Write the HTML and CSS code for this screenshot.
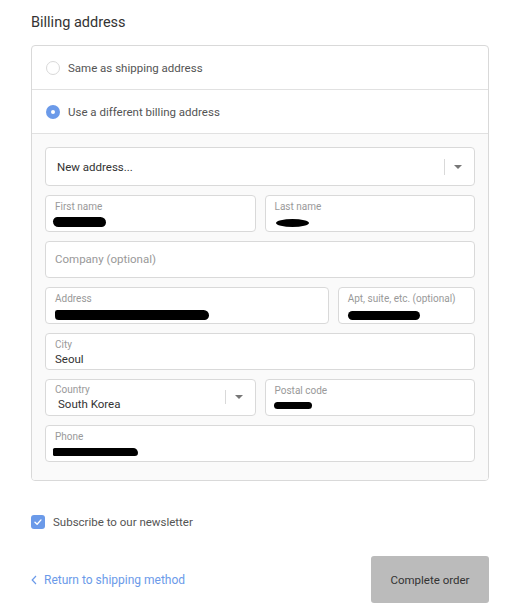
FILE: index.html
```html
<!DOCTYPE html>
<html lang="en">
<head>
<meta charset="utf-8">
<title>Billing address</title>
<link rel="stylesheet" href="styles.css">
</head>
<body>
<main class="page">
  <h2 class="title">Billing address</h2>
  <div class="box">
    <label class="option">
      <span class="radio"></span>
      <span class="option-text">Same as shipping address</span>
    </label>
    <label class="option option-active">
      <span class="radio radio-on"><span class="radio-dot"></span></span>
      <span class="option-text">Use a different billing address</span>
    </label>
    <div class="panel">
      <div class="select-field">
        <span class="select-text">New address...</span>
        <span class="sep"></span>
        <span class="caret"></span>
      </div>
      <div class="fields">
        <div class="cell half">
          <div class="input">
            <span class="lbl">First name</span>
            <span class="blob blob-first"></span>
          </div>
        </div>
        <div class="cell half">
          <div class="input">
            <span class="lbl">Last name</span>
            <span class="blob blob-last"></span>
          </div>
        </div>
        <div class="cell full">
          <div class="input input-empty">
            <span class="placeholder">Company (optional)</span>
          </div>
        </div>
        <div class="cell two">
          <div class="input">
            <span class="lbl">Address</span>
            <span class="blob blob-addr"></span>
          </div>
        </div>
        <div class="cell one">
          <div class="input">
            <span class="lbl">Apt, suite, etc. (optional)</span>
            <span class="blob blob-apt"></span>
          </div>
        </div>
        <div class="cell full">
          <div class="input">
            <span class="lbl">City</span>
            <span class="val">Seoul</span>
          </div>
        </div>
        <div class="cell half">
          <div class="input input-select">
            <div class="sel-body">
              <span class="lbl">Country</span>
              <span class="val val-country">South Korea</span>
            </div>
            <span class="sep sep-small"></span>
            <span class="caret"></span>
          </div>
        </div>
        <div class="cell half">
          <div class="input">
            <span class="lbl">Postal code</span>
            <span class="blob blob-postal"></span>
          </div>
        </div>
        <div class="cell full">
          <div class="input">
            <span class="lbl">Phone</span>
            <span class="blob blob-phone"></span>
          </div>
        </div>
      </div>
    </div>
  </div>

  <label class="newsletter">
    <span class="checkbox">
      <svg width="10" height="10" viewBox="0 0 10 10"><path d="M2 5.2 L4.1 7.2 L8 2.9" fill="none" stroke="#fff" stroke-width="1.4" stroke-linecap="round" stroke-linejoin="round"/></svg>
    </span>
    <span class="newsletter-text">Subscribe to our newsletter</span>
  </label>

  <div class="footer">
    <a class="back" href="#">
      <svg class="chev" width="6" height="10" viewBox="0 0 6 10"><path d="M5 1 L1.2 5 L5 9" fill="none" stroke="#6b9ae9" stroke-width="1.2"/></svg>
      <span>Return to shipping method</span>
    </a>
    <button class="complete" type="button">Complete order</button>
  </div>
</main>
</body>
</html>
```

FILE: styles.css
```css
* { box-sizing: border-box; }
html, body { margin: 0; padding: 0; background: #ffffff; }
body {
  font-family: Roboto, "Noto Sans", "Liberation Sans", sans-serif;
  color: #333333;
  width: 506px;
}
.page {
  padding: 13px 17px 0 31px;
}
.title {
  margin: 0;
  font-size: 14.5px;
  font-weight: 400;
  line-height: 20px;
  color: #333;
}
.box {
  margin-top: 12px;
  border: 1px solid #d9d9d9;
  border-radius: 4px;
  overflow: hidden;
}
.option {
  display: flex;
  align-items: center;
  height: 44px;
  padding-left: 14px;
  padding-top: 1px;
  border-bottom: 1px solid #e1e1e1;
  font-size: 11.5px;
  color: #545454;
}
.radio {
  width: 14px;
  height: 14px;
  border-radius: 50%;
  border: 1px solid #d9d9d9;
  background: #fff;
  margin-right: 8px;
  display: flex;
  align-items: center;
  justify-content: center;
  flex: none;
}
.radio-on {
  border: none;
  background: #6b9ae9;
}
.radio-dot {
  width: 4px;
  height: 4px;
  border-radius: 50%;
  background: #fff;
}
.panel {
  background: #fafafa;
  padding: 13px 13px 14px 13px;
}
.select-field {
  display: flex;
  align-items: center;
  height: 39px;
  background: #fff;
  border: 1px solid #d9d9d9;
  border-radius: 4px;
  padding: 0 12px 0 11px;
  font-size: 11.5px;
  color: #333;
}
.select-text { flex: 1; }
.sep {
  width: 1px;
  height: 16px;
  background: #d9d9d9;
  margin-right: 9px;
}
.sep-small { height: 14px; margin-right: 9px; }
.caret {
  width: 0;
  height: 0;
  border-left: 4px solid transparent;
  border-right: 4px solid transparent;
  border-top: 4px solid #777;
}
.fields {
  display: flex;
  flex-wrap: wrap;
  margin: 4px -4.5px 0 -4.5px;
}
.cell {
  padding: 4.5px;
}
.half { width: 50%; }
.full { width: 100%; }
.two { width: 66.667%; }
.one { width: 33.333%; }
.input {
  height: 37px;
  background: #fff;
  border: 1px solid #d9d9d9;
  border-radius: 4px;
  padding: 5px 9px 0 9px;
  display: flex;
  flex-direction: column;
}
.input-empty {
  justify-content: center;
  padding-top: 0;
}
.placeholder {
  font-size: 11.5px;
  color: #999;
}
.lbl {
  font-size: 10px;
  line-height: 12px;
  color: #999;
  white-space: nowrap;
}
.val {
  font-size: 11.5px;
  line-height: 16px;
  color: #333;
}
.input-select {
  flex-direction: row;
  align-items: center;
  padding: 0 12px 0 9px;
}
.sel-body {
  flex: 1;
  display: flex;
  flex-direction: column;
  padding-top: 2px;
}
.val-country { padding-left: 3px; }
.blob {
  display: block;
  background: #000;
  border-radius: 6px;
}
.blob-first { width: 53px; height: 10px; margin: 4px 0 0 -2px; border-radius: 5px 6px 5px 6px; }
.blob-last { width: 33px; height: 8px; margin: 6px 0 0 1px; border-radius: 50%; }
.blob-addr { width: 154px; height: 10px; margin: 5px 0 0 0; border-radius: 3px 7px 6px 5px; }
.blob-apt { width: 72px; height: 9px; margin: 6px 0 0 0; border-radius: 5px; }
.blob-postal { width: 38px; height: 7px; margin: 5px 0 0 -1px; border-radius: 4px; }
.blob-phone { width: 85px; height: 8px; margin: 5px 0 0 -2px; border-radius: 2px 6px 4px 2px; }

.newsletter {
  display: flex;
  align-items: center;
  margin-top: 34px;
  font-size: 11.5px;
  color: #545454;
}
.checkbox {
  width: 14px;
  height: 14px;
  border-radius: 3px;
  background: #6b9ae9;
  display: flex;
  align-items: center;
  justify-content: center;
  margin-right: 8px;
}
.footer {
  display: flex;
  align-items: center;
  justify-content: space-between;
  margin-top: 27px;
}
.back {
  display: flex;
  align-items: center;
  font-size: 12px;
  color: #6b9ae9;
  text-decoration: none;
}
.chev { margin-right: 7px; }
.complete {
  width: 118px;
  height: 47px;
  border: none;
  border-radius: 3px;
  background: #bbbbbb;
  color: #333;
  font-family: inherit;
  font-size: 11.5px;
}
```
